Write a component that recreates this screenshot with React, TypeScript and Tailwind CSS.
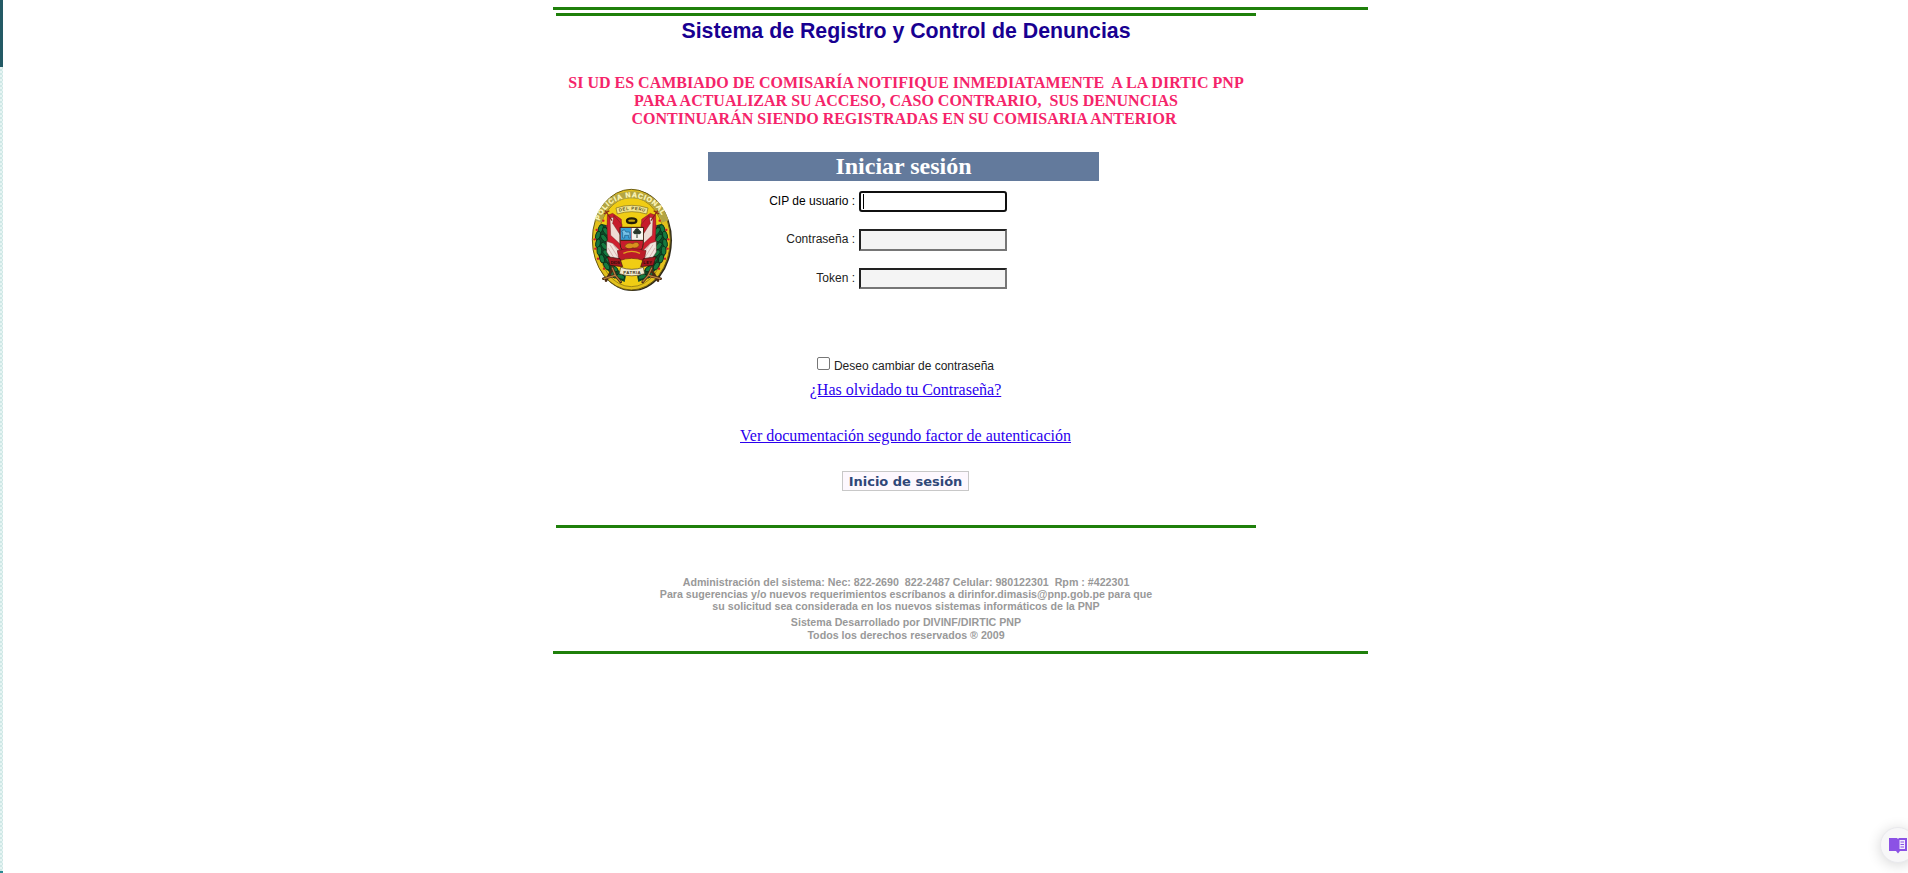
import React from 'react';

function Leaves({ flip }: { flip?: boolean }) {
  const pts: [number, number, number][] = [
    [62, 146, 20], [78, 154, -35], [54, 166, 15], [72, 174, -35], [54, 190, 10], [73, 198, -40],
    [58, 212, 0], [79, 220, -45], [66, 236, -15], [88, 242, -50], [80, 258, -30], [102, 266, -60], [100, 284, -50], [122, 290, -70],
  ];
  return (
    <g transform={flip ? 'translate(309 0) scale(-1 1)' : undefined}>
      <path d="M66 132C44 160 40 214 68 250C84 278 106 296 134 306L138 286C112 274 98 254 92 232C82 200 82 170 90 138Z" fill="#0f4a28" />
      {pts.map(([x, y, r]) => (
        <ellipse key={`${x}-${y}`} cx={x} cy={y} rx="7" ry="13" fill="#157a40" stroke="#0a2c18" strokeWidth="2.5" transform={`rotate(${r} ${x} ${y})`} />
      ))}
      {[[70, 122], [82, 138], [50, 150], [44, 178], [84, 184], [46, 206], [90, 212], [54, 236], [72, 266], [92, 290]].map(([x, y]) => (
        <circle key={`${x}-${y}`} cx={x} cy={y} r="3.5" fill="#d01e2c" />
      ))}
    </g>
  );
}

function Flags({ flip }: { flip?: boolean }) {
  return (
    <g transform={flip ? 'translate(309 0) scale(-1 1)' : undefined} stroke="#5b1a14" strokeWidth="1.2">
      <path d="M82 106L98 100L124 118L130 228L94 234Q78 190 82 106Z" fill="#cf2130" />
      <path d="M90 114L100 112L124 150V196L92 166Z" fill="#efdcd4" />
      <path d="M102 106L126 134L124 170L98 130Z" fill="#c61b2b" />
      <path d="M80 184L98 190L122 214L118 236L94 238L80 216Z" fill="#f1e6df" />
      <path d="M90 194L114 232M84 204L102 234M100 194L120 222" stroke="#b9646a" fill="none" />
      <path d="M76 92L96 122M72 102L88 92" stroke="#8a2414" strokeWidth="3.5" fill="none" />
    </g>
  );
}

function Emblem() {
  return (
    <svg viewBox="33 24 246 312" className="h-[104px] w-[82px]" aria-label="Policía Nacional del Perú">
      <defs>
        <path id="arc-top" d="M58 124C72 82 102 55 155 51C208 55 238 82 254 124" />
        <path id="arc-low" d="M112 97Q155 82 200 97" />
      </defs>
      <ellipse cx="157" cy="181" rx="119" ry="152" fill="#2b2618" />
      <ellipse cx="154" cy="179" rx="117" ry="151" fill="#e2c01c" stroke="#6b5c14" strokeWidth="3" />
      <ellipse cx="154" cy="186" rx="100" ry="134" fill="#f0cd14" stroke="#7a6614" strokeWidth="2" />
      <path d="M54 124C70 76 102 46 155 44C208 46 240 76 256 124" fill="none" stroke="#b3a544" strokeWidth="21" />
      <text fontFamily="Liberation Sans" fontWeight="700" fontSize="21" fill="#fff8bd" stroke="#fff8bd" strokeWidth="0.8">
        <textPath href="#arc-top" startOffset="2" textLength="238">POLICIA NACIONAL</textPath>
      </text>
      <Leaves />
      <Leaves flip />
      <Flags />
      <Flags flip />
      <path d="M108 84Q155 68 204 84L200 102Q155 88 112 102Z" fill="#f3e792" stroke="#7a6a1c" strokeWidth="2" />
      <text fontFamily="Liberation Sans" fontWeight="700" fontSize="13" fill="#54491a">
        <textPath href="#arc-low" startOffset="6" textLength="78">DEL PERU</textPath>
      </text>
      <ellipse cx="155" cy="122" rx="14" ry="7" fill="#c7a50f" stroke="#231d08" strokeWidth="7" />
      <path d="M120 142H190V190Q190 218 155 226Q120 218 120 190Z" fill="#c81c2c" stroke="#3a2410" strokeWidth="3" />
      <path d="M122 144H154V180H122Z" fill="#3b9fd6" />
      <path d="M155 144H189V180H155Z" fill="#f6f6ee" />
      <path d="M128 174V159L125 153L133 149L138 156H149L151 174H146V166H134V174Z" fill="#75c1e8" stroke="#1b5a84" strokeWidth="2" />
      <path d="M171 174V163M163 161A5 5 0 0 1 165 152A6 6 0 0 1 177 152A5 5 0 0 1 180 161Z" fill="#26372a" stroke="#26372a" strokeWidth="3" />
      <path d="M122 181H189" stroke="#3a2410" strokeWidth="3" />
      <path d="M134 199Q142 185 158 191Q174 181 178 195Q172 207 158 203Q146 213 134 199Z" fill="#d8911d" stroke="#7b3d12" strokeWidth="2" />
      <path d="M112 212Q155 200 198 212L192 242Q155 228 118 242Z" fill="#bd1b29" stroke="#6d1616" strokeWidth="2" />
      <path d="M130 220Q155 208 180 220" fill="none" stroke="#e0a41f" strokeWidth="4" />
      <path d="M82 230L120 236L128 260L90 256Z M228 230L190 236L182 260L220 256Z" fill="#a3161f" stroke="#31120e" strokeWidth="2" />
      <text x="92" y="251" textLength="28" fontFamily="Liberation Sans" fontWeight="700" fontSize="12" fill="#2a0c0a">DIOS</text>
      <text x="190" y="251" textLength="26" fontFamily="Liberation Sans" fontWeight="700" fontSize="12" fill="#2a0c0a">LEY</text>
      <path d="M122 262Q155 274 190 262L194 281Q155 294 118 281Z" fill="#f4ecd2" stroke="#4b3c1c" strokeWidth="2" />
      <text x="130" y="282" textLength="52" fontFamily="Liberation Sans" fontWeight="700" fontSize="13" fill="#40321a">PATRIA</text>
      <path d="M97 262L106 286M106 286L70 296M106 286L122 306M96 270L78 302M216 262L205 286M205 286L242 296M205 286L188 306M214 270L234 302" stroke="#4b2c14" strokeWidth="8" fill="none" strokeLinecap="round" />
      <path d="M97 264L106 286M106 286L72 296M106 286L121 304M215 264L205 286M205 286L240 296M205 286L189 304" stroke="#b98243" strokeWidth="3.5" fill="none" strokeLinecap="round" />
    </svg>
  );
}

const arial = "font-['Liberation_Sans',sans-serif]";

function Line({ className, children }: { className: string; children: React.ReactNode }) {
  return (
    <div className="flex justify-center">
      <span className={`whitespace-pre ${className}`}>{children}</span>
    </div>
  );
}

function Field({ label, labelClass, inputClass }: { label: string; labelClass: string; inputClass: string }) {
  return (
    <label className="flex w-full items-start">
      <span className={`w-[147px] whitespace-nowrap text-right ${labelClass}`}>{label}</span>
      <input className={`ml-1 w-[148px] outline-none ${inputClass}`} />
    </label>
  );
}

export default function App() {
  return (
    <div className="relative flex h-[873px] w-full overflow-hidden bg-white font-['Liberation_Serif',serif]">
      <aside className="flex w-[3px] shrink-0 flex-col">
        <div className="h-[67px] bg-[#235a65]" />
        <div className="flex-1 bg-[#dff0ef] bg-[repeating-conic-gradient(#cfe8e6_0_25%,#e6f4f3_0_50%)] bg-[length:4px_4px]" />
        <div className="h-[2px] bg-[#2b8a92]" />
      </aside>

      <main className="ml-[550px] flex h-[654px] w-[815px] flex-col border-b-[3px] border-[#1f800b] pt-[7px]">
        <div className="h-[3px] shrink-0 bg-[#1f800b]" />
        <div className="ml-[3px] mt-[3px] h-[515px] w-[700px] shrink-0 border-y-[3px] border-[#1f800b]">
          <h1 className="h-[58px] pt-[3px]">
            <Line className="font-['Liberation_Sans',sans-serif] text-[21.33px] font-bold leading-6 text-[#180091]">Sistema de Registro y Control de Denuncias</Line>
          </h1>
          <div className="h-[78px] text-[16px] font-bold leading-[18px] text-[#f5246a]">
            <Line className="">{'SI UD ES CAMBIADO DE COMISARÍA NOTIFIQUE INMEDIATAMENTE\u00a0 A LA DIRTIC PNP'}</Line>
            <Line className="">{'PARA ACTUALIZAR SU ACCESO, CASO CONTRARIO,\u00a0 SUS DENUNCIAS'}</Line>
            <Line className="">{'CONTINUARÁN SIENDO REGISTRADAS EN SU COMISARIA ANTERIOR '}</Line>
          </div>
          <div className="flex h-[139px]">
            <div className="ml-[35px] w-[117px] pt-[36px]">
              <Emblem />
            </div>
            <form className="flex w-[391px] flex-col">
              <h2 className="h-[29px] bg-[#637a9c] text-center text-[24px] font-bold leading-[29px] text-white">Iniciar sesión</h2>
              <div className="mt-[10px] flex h-[38px]">
                <Field label="CIP de usuario :" labelClass={`${arial} text-[12px] leading-[21px] text-black`} inputClass="h-[21px] rounded-[3px] border-2 border-[#101010] bg-[linear-gradient(#000,#000)] bg-[length:1px_15px] bg-[position:2px_1px] bg-no-repeat" />
              </div>
              <div className="flex h-[39px]">
                <Field label="Contraseña :" labelClass={`${arial} text-[12px] leading-[20px] text-[#222]`} inputClass="h-[22px] border-2 border-b-[#767676] border-l-[#222] border-r-[#767676] border-t-[#222] bg-[#f4f4f4]" />
              </div>
              <div className="flex">
                <Field label="Token :" labelClass={`${arial} text-[12px] leading-[20px] text-[#222]`} inputClass="h-[21px] border-2 border-b-[#767676] border-l-[#222] border-r-[#767676] border-t-[#222] bg-[#f4f4f4]" />
              </div>
            </form>
          </div>
          <label className="mt-[66px] flex h-[23px] justify-center pr-px">
            <span className="h-[13px] w-[13px] rounded-[2px] border border-[#767676] bg-white" />
            <span className="ml-1 font-['Liberation_Sans',sans-serif] text-[12px] leading-[18px] text-[#222]">Deseo cambiar de contraseña</span>
          </label>
          <a className="flex h-[46px] justify-center pr-px text-[16px] leading-[20px] text-[#2b00ee] underline">¿Has olvidado tu Contraseña?</a>
          <a className="flex h-[45px] justify-center pr-px text-[16px] leading-[20px] text-[#2b00ee] underline">Ver documentación segundo factor de autenticación</a>
          <div className="flex justify-center pr-px">
            <button className="h-[20px] w-[127px] whitespace-nowrap border border-[#c8c8c8] bg-[#fdf8fe] font-['DejaVu_Sans',sans-serif] text-[13px] font-bold leading-[17px] text-[#2f4778]">Inicio de sesión</button>
          </div>
        </div>
        <footer className="ml-[3px] w-[700px] pt-[48px] font-['Liberation_Sans',sans-serif] text-[10.67px] font-bold leading-[12px] text-[#999]">
          <Line className="">{'Administración del sistema: Nec: 822-2690\u00a0 822-2487 Celular: 980122301\u00a0 Rpm : #422301'}</Line>
          <Line className="">Para sugerencias y/o nuevos requerimientos escríbanos a dirinfor.dimasis@pnp.gob.pe para que</Line>
          <Line className="">su solicitud sea considerada en los nuevos sistemas informáticos de la PNP</Line>
          <div className="pt-1 leading-[13px]">
            <Line className="">Sistema Desarrollado por DIVINF/DIRTIC PNP</Line>
            <Line className="">Todos los derechos reservados ® 2009</Line>
          </div>
        </footer>
      </main>

      <button className="absolute left-[1880px] top-[827px] h-[36px] w-[36px] rounded-full border border-[#e9e9ed] bg-[#f7f7f8] shadow-[0_2px_14px_rgba(0,0,0,0.16)]">
        <svg viewBox="0 0 18 17" className="ml-2 mt-px h-[17px] w-[18px]">
          <path d="M0 1H8L9 2L10 1H18V14H11L9 16.500L7 14H0Z" fill="#8b52e5" />
          <path d="M10.500 3H16V12H10.500Z" fill="#f3ecfd" />
          <path d="M11.500 5H15M11.500 7.500H15M11.500 10H15" stroke="#8b52e5" strokeWidth="1" />
        </svg>
      </button>
    </div>
  );
}
